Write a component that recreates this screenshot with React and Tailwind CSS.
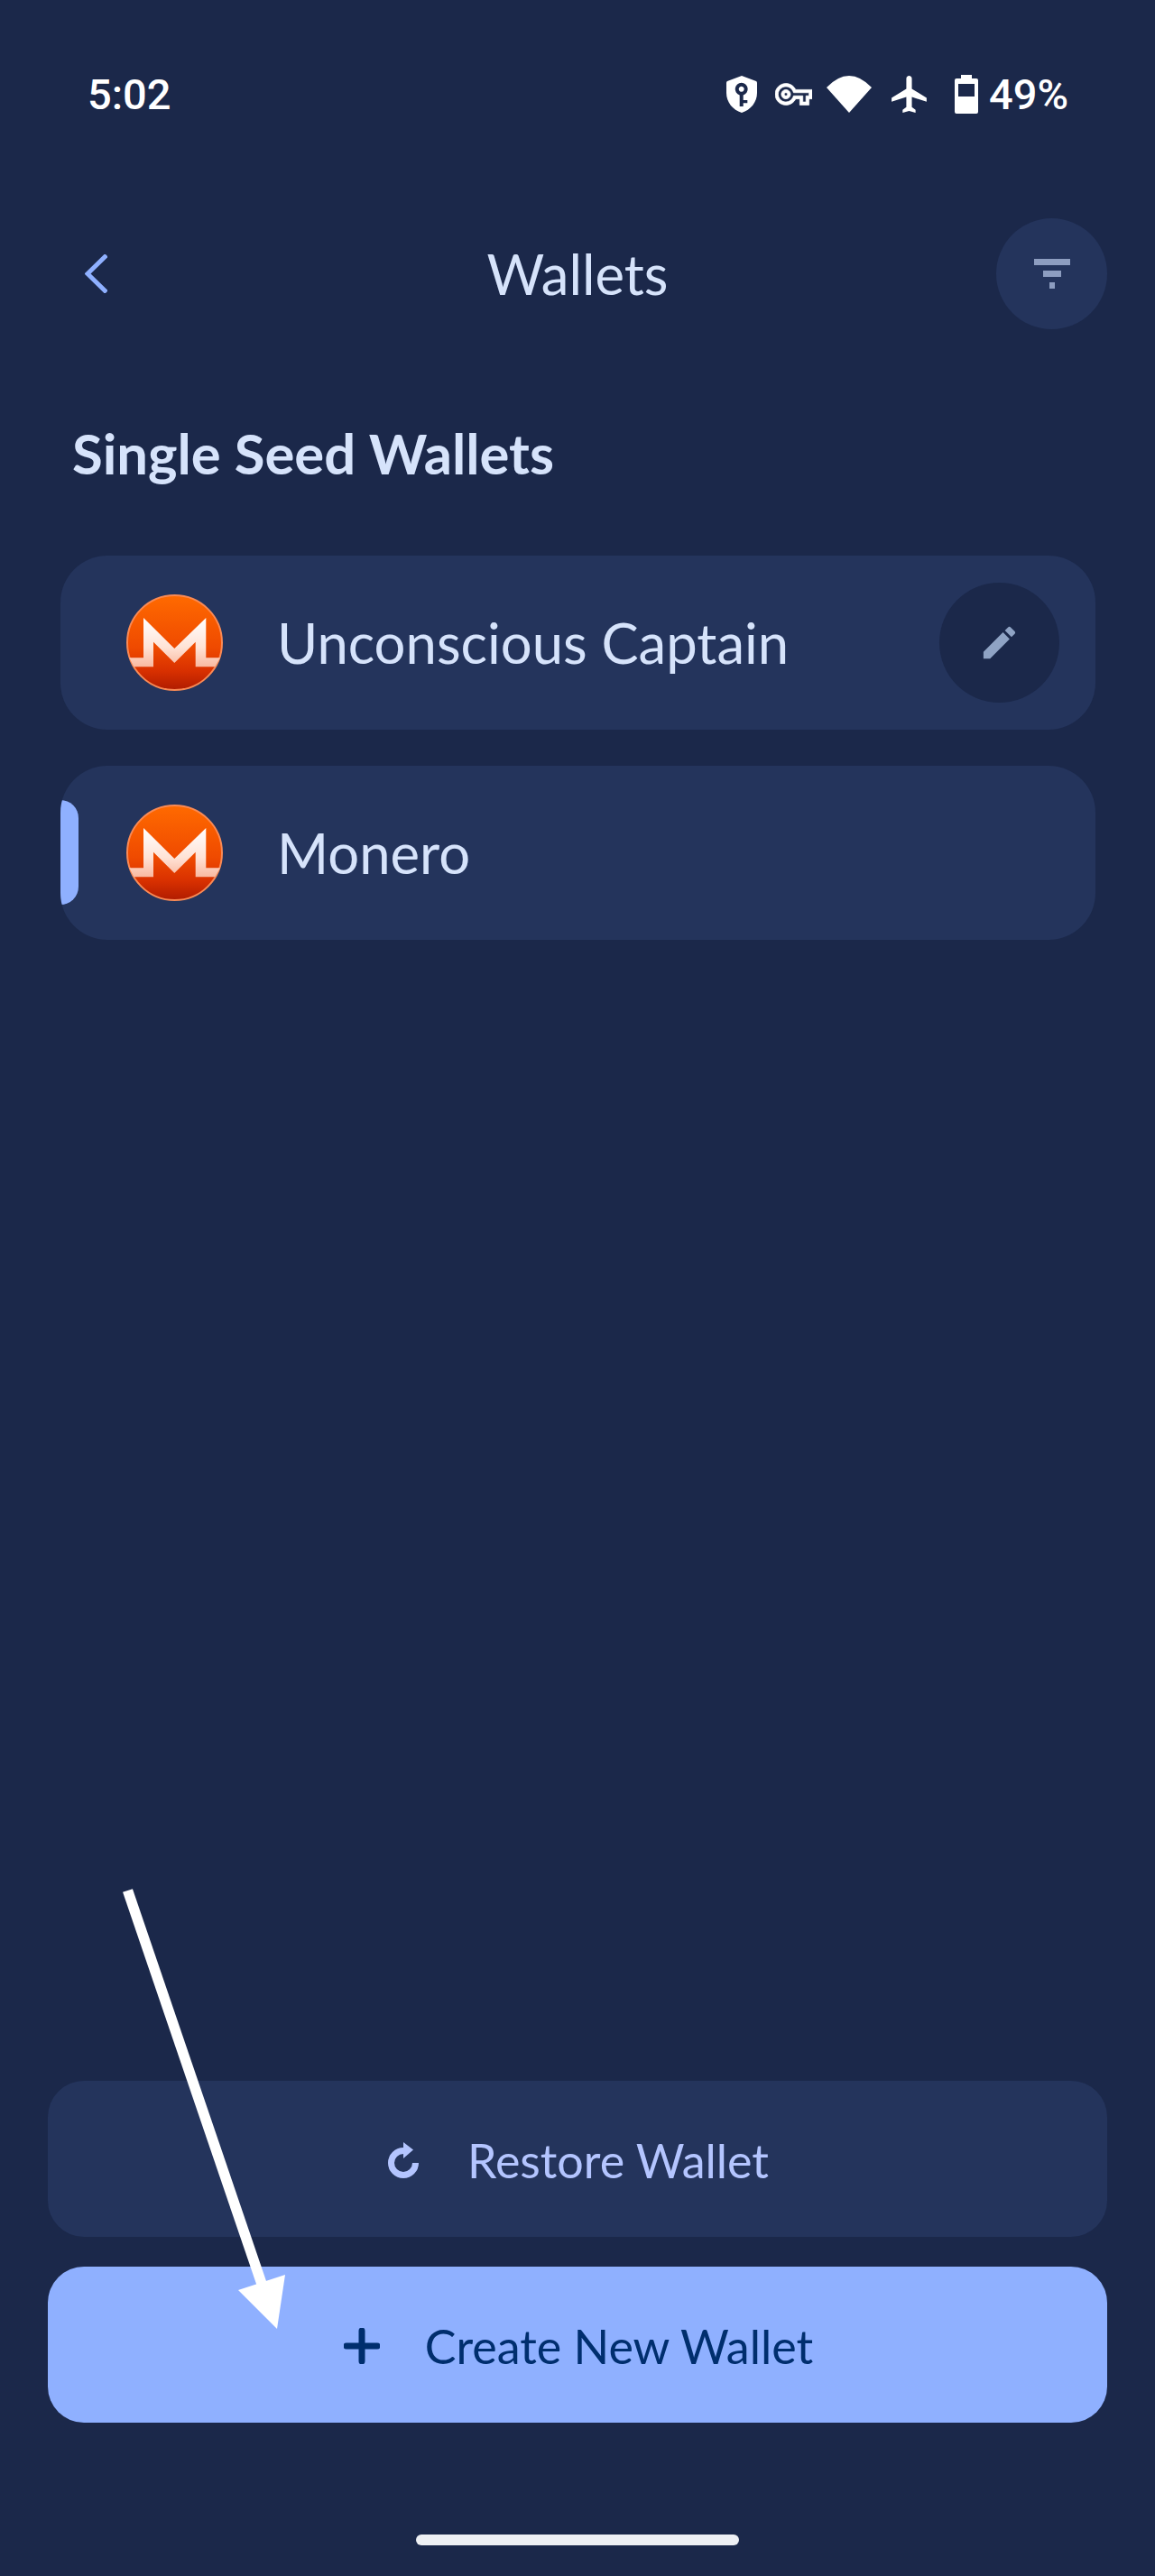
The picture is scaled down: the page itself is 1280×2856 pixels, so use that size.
const LATO = "font-['Lato','Liberation_Sans',sans-serif]";

function MoneroLogo({ id }) {
  return (
    <svg width="107" height="107" viewBox="0 0 107 107" className="shrink-0">
      <defs>
        <linearGradient id={`${id}-bg`} x1="0" y1="0" x2="0" y2="1">
          <stop offset="0" stopColor="#ff6a00" />
          <stop offset="0.55" stopColor="#ef4a00" />
          <stop offset="0.8" stopColor="#d83000" />
          <stop offset="1" stopColor="#b01c00" />
        </linearGradient>
        <linearGradient id={`${id}-m`} x1="0" y1="0" x2="0" y2="1">
          <stop offset="0" stopColor="#ffffff" />
          <stop offset="0.6" stopColor="#ffe3d6" />
          <stop offset="1" stopColor="#f9b9a0" />
        </linearGradient>
      </defs>
      <circle cx="53.5" cy="53.5" r="52.5" fill={`url(#${id}-bg)`} stroke="#f98a55" strokeWidth="2" />
      <path
        d="M19 26 L53.3 60 L88.3 26 V70.3 H104 L98.3 80.3 H76.7 V52.7 L53.3 76 L30 52.7 V80.3 H8.3 L3.3 70.3 H19 Z"
        fill={`url(#${id}-m)`}
      />
    </svg>
  );
}

function WalletRow({ name, id, active, edit }) {
  return (
    <div className="relative h-[193px] rounded-[52px] bg-[#24345c] flex items-center pl-[73px] pr-[40px] overflow-hidden">
      {active && <div className="absolute left-0 top-[38px] w-[20px] h-[116px] rounded-r-[20px] bg-[#8fb0ff]" />}
      <MoneroLogo id={id} />
      <span className={`ml-[60px] text-[61.6px] leading-none text-[#d6e3fb] ${LATO}`}>{name}</span>
      {edit && (
        <div className="ml-auto w-[133px] h-[133px] rounded-full bg-[#1b284a] flex items-center justify-center">
          <svg width="47" height="47" viewBox="0 0 24 24" fill="#8fa3c4">
            <path d="M3 17.25V21h3.75L17.81 9.94l-3.75-3.75L3 17.25zM20.71 7.04c.39-.39.39-1.02 0-1.41l-2.34-2.34c-.39-.39-1.02-.39-1.41 0l-1.83 1.83 3.75 3.75 1.83-1.83z" />
          </svg>
        </div>
      )}
    </div>
  );
}

function StatusIcons() {
  return (
    <div className="flex items-center">
      <svg width="34" height="41" viewBox="0 0 34 41" fill="#fff">
        <path
          fillRule="evenodd"
          d="M17 0 L33 6 Q34 6.4 34 8 V19 C34 29 27 38 17 41 C7 38 0 29 0 19 V8 Q0 6.4 1 6 Z M16.700 7.700 A7 7 0 0 0 14.700 21.400 V34 H18.700 V30.300 H23.300 V27 H18.700 V21.400 A7 7 0 0 0 16.700 7.700 Z M16.700 11.700 A3 3 0 1 1 16.690 11.700 Z"
        />
      </svg>
      <svg width="41" height="41" viewBox="0 0 24 24" fill="#fff" stroke="#fff" strokeWidth="0.4" className="ml-[20px]">
        <path d="M22 19h-6v-4h-2.68c-1.14 2.42-3.6 4-6.32 4-3.86 0-7-3.14-7-7s3.14-7 7-7c2.72 0 5.17 1.58 6.32 4H24v6h-2v4zm-4-2h2v-4h2v-2H11.94l-.23-.67C11.01 8.34 9.11 7 7 7c-2.76 0-5 2.24-5 5s2.24 5 5 5c2.11 0 4.01-1.34 4.71-3.33l.23-.67H18v4zM7 15c-1.65 0-3-1.35-3-3s1.35-3 3-3 3 1.35 3 3-1.35 3-3 3zm0-4c-.55 0-1 .45-1 1s.45 1 1 1 1-.45 1-1-.45-1-1-1z" />
      </svg>
      <svg width="50" height="41" viewBox="0 0 50 41" fill="#fff" className="ml-[16px]">
        <path d="M0 13 Q25 -13 50 13 L25 41 Z" />
      </svg>
      <svg width="49" height="49" viewBox="0 0 24 24" fill="#fff" className="ml-[18px]">
        <path d="M21 16v-2l-8-5V3.500c0-.83-.67-1.500-1.500-1.500S10 2.670 10 3.500V9l-8 5v2l8-2.500V19l-2 1.500V22l3.500-1 3.500 1v-1.500L13 19v-5.500l8 2.500z" />
      </svg>
      <svg width="26" height="43" viewBox="0 0 26 43" fill="#fff" className="ml-[25px]">
        <path
          fillRule="evenodd"
          d="M7 0 H19 V4 H24 Q26 4 26 6 V41 Q26 43 24 43 H2 Q0 43 0 41 V6 Q0 4 2 4 H7 Z M4 10 V24 H22 V10 Z"
        />
      </svg>
      <span className="ml-[12px] text-[47px] leading-none font-medium text-white font-['Roboto',sans-serif]">49%</span>
    </div>
  );
}

function ActionButton({ label, primary, children }) {
  return (
    <button
      className={`h-[173px] w-full pt-[2px] rounded-[40px] flex items-center justify-center text-[52px] leading-none ${LATO} ${
        primary ? "bg-[#8fb0ff] text-[#002e6e]" : "bg-[#24345c] text-[#b4c5ff]"
      }`}
    >
      {children}
      {label}
    </button>
  );
}

export default function App() {
  return (
    <div className="relative h-[2856px] w-full overflow-hidden bg-[#1b284a] flex flex-col">
      <div className="flex items-center justify-between pl-[97px] pr-[96px] pt-[80px] h-[128px]">
        <span className="text-[47px] leading-none font-medium text-white font-['Roboto',sans-serif]">5:02</span>
        <StatusIcons />
      </div>

      <div className="mt-[114px] grid grid-cols-[1fr_auto_1fr] items-center px-[53px]">
        <svg width="25" height="43" viewBox="0 0 25 43" fill="none" stroke="#8fb0ff" strokeWidth="5" className="ml-[41px]">
          <path d="M24 1 L3 21.500 L24 42" />
        </svg>
        <h1 className={`text-[61.6px] leading-none text-[#d6e3fb] ${LATO}`}>Wallets</h1>
        <div className="justify-self-end w-[123px] h-[123px] rounded-full bg-[#24345c] flex flex-col items-center justify-center gap-[6px]">
          <div className="w-[40px] h-[7px] bg-[#8d9dc0]" />
          <div className="w-[20px] h-[7px] bg-[#8d9dc0]" />
          <div className="w-[6px] h-[7px] bg-[#8d9dc0]" />
        </div>
      </div>

      <h2 className={`mt-[106px] ml-[80px] text-[61.6px] leading-[62px] font-bold text-[#d6e3fb] ${LATO}`}>Single Seed Wallets</h2>

      <div className="mt-[83px] ml-[67px] mr-[66px] flex flex-col gap-[40px]">
        <WalletRow name="Unconscious Captain" id="mon1" edit />
        <WalletRow name="Monero" id="mon2" active />
      </div>

      <div className="mt-auto mx-[53px] flex flex-col gap-[33px]">
        <ActionButton label="Restore Wallet">
          <svg width="36" height="40" viewBox="0 0 36 40" fill="none" className="mr-[54px] translate-x-[2px]">
            <path d="M17 9.500 A13.500 13.500 0 1 0 30.500 23" stroke="#b4c5ff" strokeWidth="7" />
            <path d="M17 0 L28 8.500 L17 18 Z" fill="#b4c5ff" />
          </svg>
        </ActionButton>
        <ActionButton label="Create New Wallet" primary>
          <svg width="40" height="40" viewBox="0 0 40 40" stroke="#002e6e" strokeWidth="7" strokeLinecap="round" className="mr-[52px] translate-x-[2px]">
            <path d="M20 3 V37 M3 20 H37" />
          </svg>
        </ActionButton>
      </div>

      <div className="mt-[124px] mb-[34px] mx-auto w-[358px] h-[12px] rounded-full bg-[#eef0f4]" />

      <svg className="absolute left-0 top-0 pointer-events-none" width="1280" height="2856" viewBox="0 0 1280 2856">
        <path d="M141.500 2096 L290 2532" stroke="#fff" strokeWidth="11.500" />
        <path d="M264 2539 L316 2522 L307 2582 Z" fill="#fff" />
      </svg>
    </div>
  );
}
